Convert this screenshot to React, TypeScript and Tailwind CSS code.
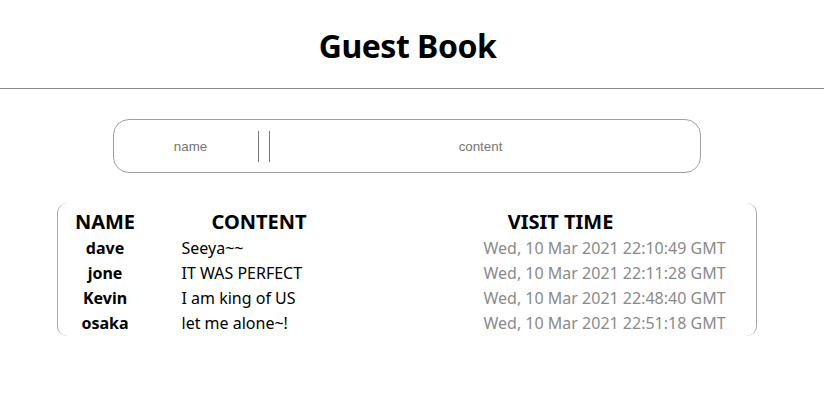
const guests = [
  { name: 'dave', content: 'Seeya~~', time: 'Wed, 10 Mar 2021 22:10:49 GMT' },
  { name: 'jone', content: 'IT WAS PERFECT', time: 'Wed, 10 Mar 2021 22:11:28 GMT' },
  { name: 'Kevin', content: 'I am king of US', time: 'Wed, 10 Mar 2021 22:48:40 GMT' },
  { name: 'osaka', content: 'let me alone~!', time: 'Wed, 10 Mar 2021 22:51:18 GMT' },
]

export default function App() {
  return (
    <div className="min-h-screen bg-white font-['Noto_Sans',sans-serif] text-black">
      <header className="h-[89px] border-b border-[#8a8a8a]">
        <div className="w-[815px] h-full flex items-center justify-center">
          <h1 className="text-[32px] font-bold tracking-[-0.5px] mt-[3px]">Guest Book</h1>
        </div>
      </header>

      <div className="w-[813px]">
        <form className="mx-auto mt-[30px] w-[588px] h-[54px] rounded-[16px] border border-[#a0a0a0] flex items-center">
          <input
            placeholder="name"
            className="w-[145px] h-[31px] pl-[10px] border-r border-[#777] text-center text-[13.33px] font-['Liberation_Sans',sans-serif] placeholder:text-[#757575] outline-none"
          />
          <input
            placeholder="content"
            className="ml-[10px] flex-1 h-[31px] pr-[8px] border-l border-[#777] text-center text-[13.33px] font-['Liberation_Sans',sans-serif] placeholder:text-[#757575] outline-none"
          />
        </form>

        <div className="mx-auto mt-[30px] w-[700px] h-[133px] rounded-[10px] border-x border-[#a8a8a8] pt-[5px]">
          <div className="flex h-[27px] items-center text-[20px] font-bold">
            <div className="w-[95px] text-center">NAME</div>
            <div className="w-[213px] text-center">CONTENT</div>
            <div className="flex-1 text-center">VISIT TIME</div>
          </div>
          {guests.map(g => (
            <div key={g.name} className="flex h-[25px] items-center text-[16px]">
              <div className="w-[95px] text-center font-bold">{g.name}</div>
              <div className="w-[213px] pl-[29px]">{g.content}</div>
              <div className="flex-1 pl-[118px] text-[#8a8a8a]">{g.time}</div>
            </div>
          ))}
        </div>
      </div>
    </div>
  )
}
